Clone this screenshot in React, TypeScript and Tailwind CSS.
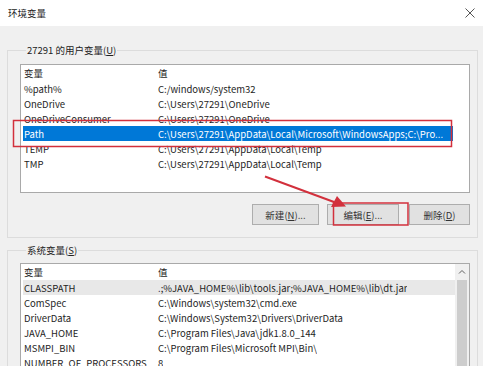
const userVars = [
  { name: "%path%", value: "C:/windows/system32" },
  { name: "OneDrive", value: "C:\\Users\\27291\\OneDrive" },
  { name: "OneDriveConsumer", value: "C:\\Users\\27291\\OneDrive" },
  { name: "Path", value: "C:\\Users\\27291\\AppData\\Local\\Microsoft\\WindowsApps;C:\\Pro...", selected: true },
  { name: "TEMP", value: "C:\\Users\\27291\\AppData\\Local\\Temp" },
  { name: "TMP", value: "C:\\Users\\27291\\AppData\\Local\\Temp" },
];

const sysVars = [
  { name: "CLASSPATH", value: ".;%JAVA_HOME%\\lib\\tools.jar;%JAVA_HOME%\\lib\\dt.jar", selected: true },
  { name: "ComSpec", value: "C:\\Windows\\system32\\cmd.exe" },
  { name: "DriverData", value: "C:\\Windows\\System32\\Drivers\\DriverData" },
  { name: "JAVA_HOME", value: "C:\\Program Files\\Java\\jdk1.8.0_144" },
  { name: "MSMPI_BIN", value: "C:\\Program Files\\Microsoft MPI\\Bin\\" },
  { name: "NUMBER_OF_PROCESSORS", value: "8" },
];

type Row = { name: string; value: string; selected?: boolean };

function Header() {
  return (
    <div className="flex h-[16px] items-center w-[430px] ml-[2px]">
      <div className="w-[134px] pl-[1px]">变量</div>
      <div className="pl-[1px]">值</div>
    </div>
  );
}

function VarRow({ row, focused }: { row: Row; focused: boolean }) {
  const cls = row.selected
    ? focused
      ? "bg-[#0078d7] text-white"
      : "bg-[#e8e8e8]"
    : "";
  return (
    <div className={`flex h-[15px] items-center ml-[2px] whitespace-nowrap ${focused ? "w-[430px]" : "w-[432px]"} ${cls}`}>
      <div className="w-[134px] pl-[1px] shrink-0">{row.name}</div>
      <div className="pl-[1px] overflow-hidden">{row.value}</div>
    </div>
  );
}

function Btn({ label, keyChar, suffix, w }: { label: string; keyChar: string; suffix: string; w: string }) {
  return (
    <div className={`h-[21px] ${w} flex items-center justify-center bg-[#e1e1e1] border border-[#adadad] text-[#333]`}>
      {label}(<span className="underline">{keyChar}</span>){suffix}
    </div>
  );
}

export default function App() {
  return (
    <div
      className="relative w-[483px] h-[366px] overflow-hidden bg-[#f0f0f0] text-[9.5px] leading-[14px] text-[#1e1e1e]"
      style={{ fontFamily: '"Noto Sans CJK SC", "Noto Sans", sans-serif' }}
    >
      <div className="h-[26px] bg-white flex items-center justify-between pl-[8px] pr-[5px]">
        <span className="text-[#222]">环境变量</span>
        <svg width="12" height="12" viewBox="0 0 12 12" className="mr-[2px]">
          <path d="M1.5 1.5 L10.5 10.5 M10.5 1.5 L1.5 10.5" stroke="#555" strokeWidth="1" />
        </svg>
      </div>

      <fieldset className="mt-[16px] mx-[7px] w-[471px] border border-[#dcdcdc] pl-[12px] pr-[7px] pt-[6px] pb-[12px]">
        <legend className="ml-[6px] px-[1px] leading-[16px] text-[#222]">
          27291 的用户变量(<span className="underline">U</span>)
        </legend>
        <div className="h-[129px] w-[450px] bg-white border border-[#a9a9a9]">
          <Header />
          {userVars.map((r) => (
            <VarRow key={r.name} row={r} focused />
          ))}
        </div>
        <div className="mt-[11px] flex justify-end">
          <Btn label="新建" keyChar="N" suffix="..." w="w-[67px]" />
          <div className="ml-[8px]">
            <Btn label="编辑" keyChar="E" suffix="..." w="w-[72px]" />
          </div>
          <div className="ml-[10px]">
            <Btn label="删除" keyChar="D" suffix="" w="w-[61px]" />
          </div>
        </div>
      </fieldset>

      <fieldset className="mt-[4px] mx-[7px] w-[471px] border border-[#dcdcdc] pl-[12px] pr-[7px] pt-[5px]">
        <legend className="ml-[6px] px-[1px] leading-[16px] text-[#222]">
          系统变量(<span className="underline">S</span>)
        </legend>
        <div className="h-[140px] w-[450px] bg-white border border-[#a9a9a9] flex">
          <div className="flex-1 min-w-0">
            <Header />
            {sysVars.map((r) => (
              <VarRow key={r.name} row={r} focused={false} />
            ))}
          </div>
          <div className="w-[14px] bg-[#f0f0f0] flex flex-col items-center">
            <div className="h-[16px] flex items-center justify-center">
              <svg width="8" height="6" viewBox="0 0 8 6">
                <path d="M1 4.5 L4 1.5 L7 4.5" fill="none" stroke="#606060" strokeWidth="1" />
              </svg>
            </div>
            <div className="w-[10px] flex-1 bg-[#cdcdcd]" />
          </div>
        </div>
      </fieldset>

      <svg className="absolute inset-0 pointer-events-none" width="483" height="366">
        <rect x="13.5" y="120.5" width="438" height="26" fill="none" stroke="#d2303c" strokeWidth="1.5" />
        <rect x="333.5" y="203" width="74.5" height="22" fill="none" stroke="#d2303c" strokeWidth="1.5" />
        <line x1="265" y1="176.5" x2="334" y2="202" stroke="#d2303c" strokeWidth="2" />
        <path d="M346 206.5 L331 207 L337 196 Z" fill="#d2303c" />
      </svg>
    </div>
  );
}
